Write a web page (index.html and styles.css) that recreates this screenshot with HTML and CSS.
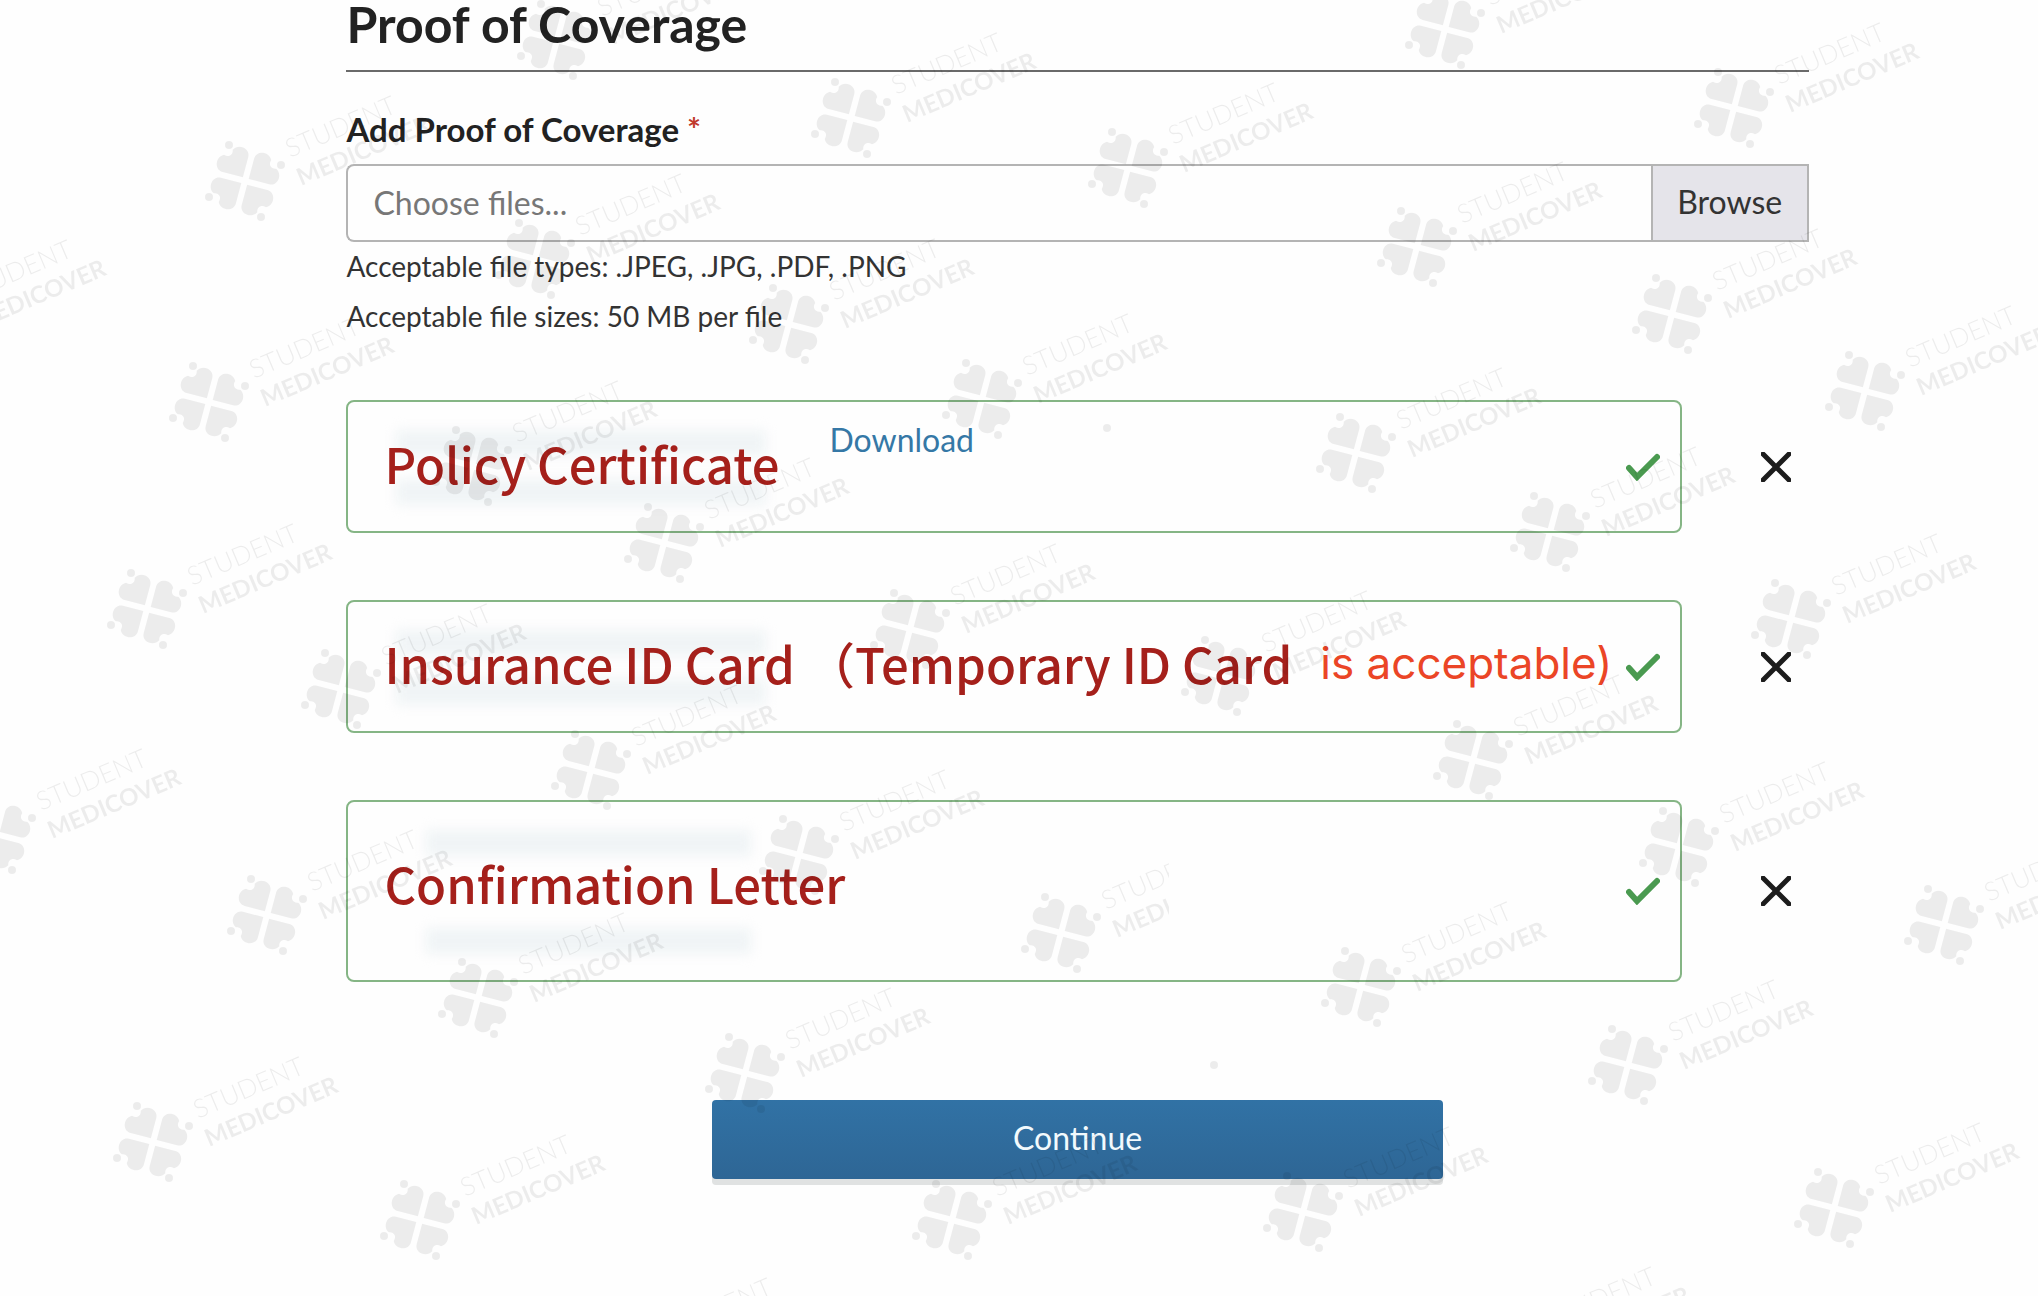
FILE: index.html
```
<!DOCTYPE html>
<html lang="en">
<head>
    <meta charset="UTF-8">
    <meta name="viewport" content="width=device-width, initial-scale=1.0">
    <title>Proof of Coverage</title>
    <link rel="stylesheet" href="styles.css">
</head>
<body>
    <main class="page">
        <h1 class="heading">Proof of Coverage</h1>

        <form class="form">
            <label class="label" for="files">Add Proof of Coverage <span class="required">*</span></label>
            <div class="picker">
                <input class="picker-input" type="text" id="files" placeholder="Choose files..." readonly>
                <button class="picker-button" type="button">Browse</button>
            </div>
            <p class="hint">Acceptable file types: .JPEG, .JPG, .PDF, .PNG</p>
            <p class="hint">Acceptable file sizes: 50 MB per file</p>

            <ul class="files">
                <li class="row">
                    <div class="card">
                        <span class="smudge smudge-top"></span>
                        <span class="smudge smudge-bottom"></span>
                        <span class="name">Policy Certificate</span>
                        <a class="download" href="#">Download</a>
                        <svg class="check" viewBox="0 0 34 28"><path d="M3 15l8 9L31 4"/></svg>
                    </div>
                    <button class="remove" type="button" aria-label="Remove Policy Certificate">
                        <svg viewBox="0 0 30 30"><path d="M2 2l26 26M28 2L2 28"/></svg>
                    </button>
                </li>
                <li class="row">
                    <div class="card">
                        <span class="smudge smudge-top"></span>
                        <span class="smudge smudge-bottom"></span>
                        <span class="name">Insurance ID Card （Temporary ID Card</span>
                        <span class="note">is acceptable)</span>
                        <svg class="check" viewBox="0 0 34 28"><path d="M3 15l8 9L31 4"/></svg>
                    </div>
                    <button class="remove" type="button" aria-label="Remove Insurance ID Card">
                        <svg viewBox="0 0 30 30"><path d="M2 2l26 26M28 2L2 28"/></svg>
                    </button>
                </li>
                <li class="row">
                    <div class="card card-tall">
                        <span class="smudge smudge-top"></span>
                        <span class="smudge smudge-bottom"></span>
                        <span class="name">Confirmation Letter</span>
                        <svg class="check" viewBox="0 0 34 28"><path d="M3 15l8 9L31 4"/></svg>
                    </div>
                    <button class="remove" type="button" aria-label="Remove Confirmation Letter">
                        <svg viewBox="0 0 30 30"><path d="M2 2l26 26M28 2L2 28"/></svg>
                    </button>
                </li>
            </ul>

            <button class="continue" type="submit">Continue</button>
        </form>
    </main>

    <!-- watermark layer -->
    <svg class="watermark" aria-hidden="true">
        <defs>
            <path id="heart" d="M3 -3V-24C3 -33 16 -35 20 -27C18 -22 22 -18 27 -20C35 -16 33 -3 24 -3Z"/>
            <g id="mark">
                <g transform="rotate(15)">
                    <use href="#heart"/>
                    <use href="#heart" transform="rotate(90)"/>
                    <use href="#heart" transform="rotate(180)"/>
                    <use href="#heart" transform="rotate(270)"/>
                </g>
                <circle cx="36" cy="-16" r="4"/>
                <circle cx="16" cy="36" r="4"/>
                <circle cx="-36" cy="16" r="4"/>
                <circle cx="-16" cy="-36" r="4"/>
                <text class="mark-thin" transform="translate(45 -23) rotate(-23)">STUDENT</text>
                <text class="mark-bold" transform="translate(56 5) rotate(-23)">MEDICOVER</text>
            </g>
            <clipPath id="cut"><rect x="1000" y="850" width="169" height="160"/></clipPath>
        </defs>
        <use href="#mark" x="557" y="40"/>
        <use href="#mark" x="851" y="118"/>
        <use href="#mark" x="1445" y="29"/>
        <use href="#mark" x="1734" y="108"/>
        <use href="#mark" x="245" y="181"/>
        <use href="#mark" x="535" y="259"/>
        <use href="#mark" x="1128" y="168"/>
        <use href="#mark" x="1417" y="247"/>
        <use href="#mark" x="-79" y="325"/>
        <use href="#mark" x="209" y="402"/>
        <use href="#mark" x="789" y="324"/>
        <use href="#mark" x="982" y="399"/>
        <use href="#mark" x="1672" y="314"/>
        <use href="#mark" x="1865" y="391"/>
        <use href="#mark" x="472" y="466"/>
        <use href="#mark" x="1356" y="453"/>
        <use href="#mark" x="664" y="543"/>
        <use href="#mark" x="1550" y="532"/>
        <use href="#mark" x="147" y="609"/>
        <use href="#mark" x="910" y="629"/>
        <use href="#mark" x="1791" y="619"/>
        <use href="#mark" x="341" y="689"/>
        <use href="#mark" x="1221" y="676"/>
        <use href="#mark" x="591" y="770"/>
        <use href="#mark" x="1473" y="760"/>
        <use href="#mark" x="-4" y="834"/>
        <use href="#mark" x="799" y="855"/>
        <use href="#mark" x="1679" y="847"/>
        <use href="#mark" x="267" y="915"/>
        <g clip-path="url(#cut)"><use href="#mark" x="1061" y="933"/></g>
        <use href="#mark" x="1944" y="925"/>
        <use href="#mark" x="478" y="998"/>
        <use href="#mark" x="1361" y="987"/>
        <use href="#mark" x="745" y="1073"/>
        <use href="#mark" x="1628" y="1065"/>
        <use href="#mark" x="153" y="1142"/>
        <use href="#mark" x="420" y="1220"/>
        <use href="#mark" x="952" y="1220"/>
        <use href="#mark" x="1303" y="1212"/>
        <use href="#mark" x="1834" y="1208"/>
        <use href="#mark" x="621" y="1363"/>
        <use href="#mark" x="1505" y="1352"/>
        <circle cx="1107" cy="428" r="4"/>
        <circle cx="1214" cy="1065" r="4"/>
    </svg>
</body>
</html>
```
FILE: styles.css
```
* {
    box-sizing: border-box;
}
body {
    margin: 0;
    min-height: 100vh;
    position: relative;
    overflow: hidden;
    background-color: #fefefe;
    color: #222;
    font-family: Lato, "Open Sans", sans-serif;
}
.page {
    padding: 0 11.25% 0 17%;
}
.heading {
    margin: 0 0 33px;
    padding-bottom: 21px;
    border-bottom: 2px solid #6a6a6a;
    font-size: 50px;
    line-height: 49px;
}
.label {
    display: block;
    margin-bottom: 11px;
    font-size: 33px;
    font-weight: bold;
    line-height: 48px;
}
.required {
    color: #c0392b;
}
.picker {
    display: flex;
    height: 78px;
}
.picker-input {
    flex: 1;
    min-width: 0;
    padding: 0 25px 2px;
    border: 2px solid #b4b4b4;
    border-right: none;
    border-radius: 8px 0 0 8px;
    background-color: #fefefe;
    font: inherit;
    font-size: 32px;
}
.picker-input::placeholder {
    color: #777;
    opacity: 1;
}
.picker-button {
    width: 158px;
    padding: 0 0 4px;
    border: 2px solid #b4b4b4;
    background-color: #e5e4ea;
    color: #333;
    font: inherit;
    font-size: 32px;
}
.hint {
    margin: 0;
    font-size: 28px;
    line-height: 50px;
    color: #333;
}
.picker + .hint {
    margin-top: -1px;
}
.files {
    display: grid;
    gap: 67px;
    margin: 59px 0 118px;
    padding: 0;
    list-style: none;
}
.row {
    display: grid;
    grid-template-columns: 1fr 66px;
    gap: 61px;
    align-items: center;
}
.card {
    position: relative;
    display: flex;
    align-items: center;
    min-height: 133px;
    padding: 0 20px 0 36px;
    border: 2px solid #85b585;
    border-radius: 8px;
}
.card-tall {
    min-height: 182px;
}
.name {
    position: relative;
    padding-bottom: 8px;
    color: #a5201b;
    font-family: "Noto Sans CJK SC", sans-serif;
    font-size: 49px;
    font-weight: 500;
    line-height: 60px;
    white-space: nowrap;
}
.card-tall .name {
    padding-bottom: 16px;
}
.note {
    margin-left: 28px;
    padding-bottom: 8px;
    color: #eb4526;
    font-family: Inter, sans-serif;
    font-size: 44px;
    line-height: 60px;
    white-space: nowrap;
}
.download {
    align-self: flex-start;
    margin: 18px 0 0 50px;
    color: #3578a6;
    font-size: 32px;
    line-height: 40px;
    text-decoration: none;
}
.check {
    width: 34px;
    height: 28px;
    margin-left: auto;
    fill: none;
    stroke: #4a9a50;
    stroke-width: 6;
    stroke-linecap: round;
}
.remove {
    padding: 18px;
    border: none;
    background: none;
}
.remove svg {
    display: block;
    width: 30px;
    height: 30px;
    stroke: #1c1c1c;
    stroke-width: 5;
    stroke-linecap: round;
}
/* blurred old file names behind the titles */
.smudge {
    position: absolute;
    left: 48px;
    width: 370px;
    height: 26px;
    background-color: #f0f4f6;
    filter: blur(6px);
}
.smudge-top {
    top: 28px;
}
.smudge-bottom {
    bottom: 26px;
}
.card-tall .smudge {
    left: 78px;
    width: 325px;
}
.continue {
    display: block;
    width: 50%;
    height: 79px;
    margin: 0 auto;
    padding: 0 0 4px;
    border: none;
    border-radius: 4px;
    background: linear-gradient(#3172a5, #2e6695);
    box-shadow: 0 6px 0 #e0e2e2;
    color: #f2fafd;
    font: inherit;
    font-size: 32px;
}
.watermark {
    position: absolute;
    top: 0;
    left: 0;
    width: 100%;
    height: 100%;
    fill: #000;
    opacity: 0.065;
    pointer-events: none;
}
.mark-thin {
    font-size: 26px;
    font-weight: 300;
}
.mark-bold {
    font-size: 24px;
    font-weight: bold;
}
```
